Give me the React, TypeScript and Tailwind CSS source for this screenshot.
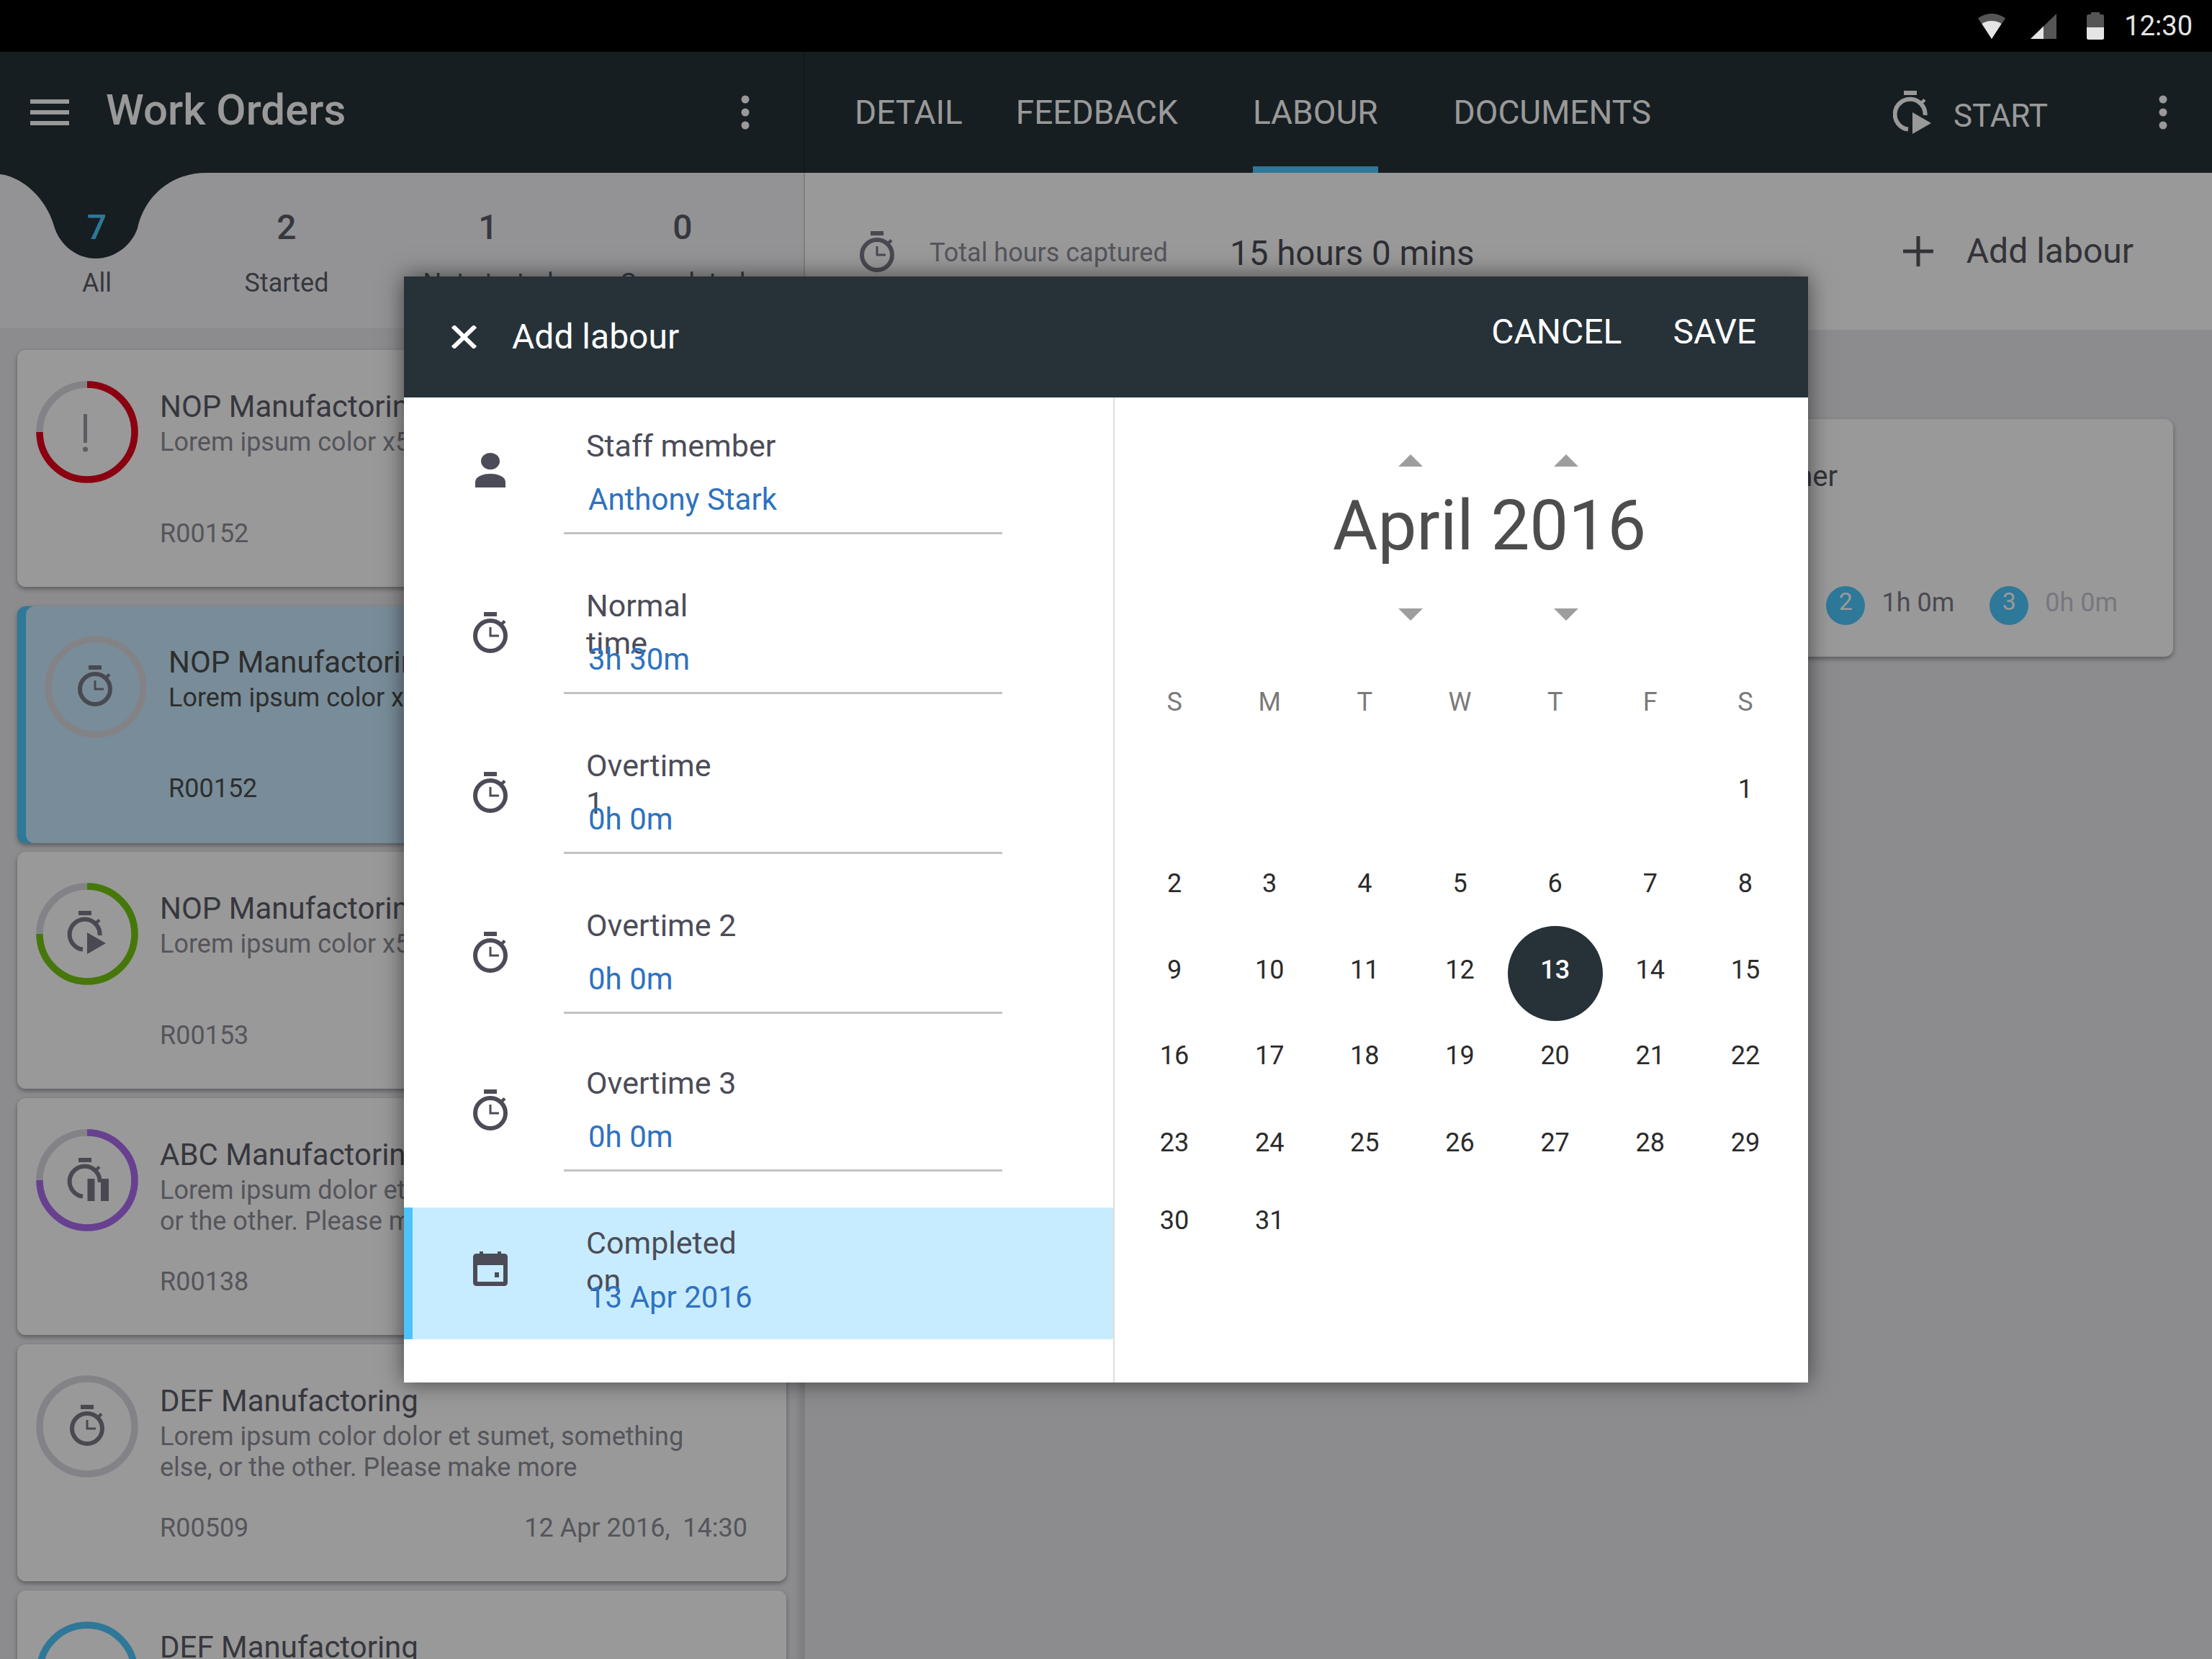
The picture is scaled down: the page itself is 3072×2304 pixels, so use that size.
import type { ReactNode } from "react";

const days = [
  { gap: "mt-[61px]", cells: ["", "", "", "", "", "", "1"] },
  { gap: "mt-[71px]", cells: ["2", "3", "4", "5", "6", "7", "8"] },
  { gap: "mt-[60px]", cells: ["9", "10", "11", "12", "13", "14", "15"] },
  { gap: "mt-[59px]", cells: ["16", "17", "18", "19", "20", "21", "22"] },
  { gap: "mt-[61px]", cells: ["23", "24", "25", "26", "27", "28", "29"] },
  { gap: "mt-[48px]", cells: ["30", "31", "", "", "", "", ""] },
];

function StopwatchShape() {
  return (
    <g>
      <rect x="15" y="0" width="18" height="6" fill="currentColor" />
      <circle cx="24" cy="33" r="21" fill="none" stroke="currentColor" strokeWidth="6" />
      <path d="M24 21v12h12" fill="none" stroke="currentColor" strokeWidth="3" />
      <path d="M39.5 17L44 12.5" fill="none" stroke="currentColor" strokeWidth="4.5" />
    </g>
  );
}

function Stopwatch({ className }: { className?: string }) {
  return (
    <svg viewBox="0 0 48 57" className={className}>
      <StopwatchShape />
    </svg>
  );
}

function TimerArc() {
  return (
    <g>
      <rect x="15" y="0" width="18" height="6" fill="currentColor" />
      <path d="M21 53.6A21 21 0 1 1 44.6 34" fill="none" stroke="currentColor" strokeWidth="6" />
      <path d="M39.5 17L44 12.5" fill="none" stroke="currentColor" strokeWidth="4.5" />
    </g>
  );
}

function TimerPlayShape() {
  return (
    <g>
      <TimerArc />
      <path d="M27 30L53 45L27 60Z" fill="currentColor" />
    </g>
  );
}

function TimerPauseShape() {
  return (
    <g>
      <TimerArc />
      <rect x="27.5" y="29" width="10" height="31" fill="currentColor" />
      <rect x="46" y="29" width="11" height="31" fill="currentColor" />
    </g>
  );
}

function Dots() {
  return (
    <svg viewBox="0 0 12 48" className="w-[12px] h-[48px] text-white">
      <ellipse cx="6" cy="6" rx="5.5" ry="5.5" fill="currentColor" />
      <ellipse cx="6" cy="24" rx="5.5" ry="5.5" fill="currentColor" />
      <ellipse cx="6" cy="42" rx="5.5" ry="5.5" fill="currentColor" />
    </svg>
  );
}

function Triangle({ down }: { down?: boolean }) {
  return (
    <svg viewBox="0 0 34 17" className="w-[34px] h-[17px]">
      <path d={down ? "M0 0H34L17 17Z" : "M0 17H34L17 0Z"} fill="#9e9e9e" />
    </svg>
  );
}

function Ring({ color, pct, children }: { color?: string; pct?: number; children?: ReactNode }) {
  return (
    <svg viewBox="0 0 142 142" className="w-[142px] h-[142px] shrink-0 text-[#7b7b88]">
      <circle cx="71" cy="71" r="66" fill="none" stroke="#dadae2" strokeWidth="9.5" />
      {color && (
        <circle
          cx="71"
          cy="71"
          r="66"
          fill="none"
          stroke={color}
          strokeWidth="9.5"
          pathLength={100}
          strokeDasharray={`${pct} ${100 - (pct ?? 0)}`}
          transform="rotate(-90 71 71)"
        />
      )}
      {children}
    </svg>
  );
}

function OrderCard({
  ring,
  title,
  desc,
  code,
  gap,
  active,
}: {
  ring: ReactNode;
  title: string;
  desc: string[];
  code: string;
  gap: string;
  active?: boolean;
}) {
  return (
    <div
      className={`${gap} h-[329px] shrink-0 rounded-[12px] shadow-[0_3px_6px_rgba(0,0,0,0.35)] ${active ? "bg-[#4ec8ff] pl-[12px]" : "bg-white"}`}
    >
      <div className={`flex h-full pl-[26px] pr-[54px] rounded-l-[12px] ${active ? "bg-[#c8ecff] pt-[41px]" : "bg-white rounded-[12px] pt-[43px]"}`}>
        {ring}
        <div className={`flex flex-col flex-1 pl-[30px] ${active ? "-mt-[41px] text-[#4d4d4d]" : "-mt-[43px] text-[#8e8e98]"}`}>
          <div className={`h-[48px] leading-[48px] text-[42px] ${active ? "mt-[54px] text-[#4d4d4d]" : "mt-[55px] text-[#5c5c68]"}`}>{title}</div>
          <div className="mt-[4px] text-[36px] leading-[43px]">
            {desc.map((d) => (
              <div key={d}>{d}</div>
            ))}
          </div>
          <div className={`mt-auto flex justify-between text-[36px] leading-[44px] ${active ? "mb-[54px]" : "mb-[52px]"}`}>
            <span>{code}</span>
            <span className="whitespace-pre">12 Apr 2016,  14:30</span>
          </div>
        </div>
      </div>
    </div>
  );
}

function FormRow({ icon, label, value, mb }: { icon: ReactNode; label: string; value: string; mb: string }) {
  return (
    <div className={`flex ${mb}`}>
      <div className="w-[222px] h-[127px] pl-[18px] flex items-center justify-center">{icon}</div>
      <div className="w-[609px]">
        <div className="h-[52px] leading-[52px] pl-[31px] text-[43px] text-[#4c4c58] whitespace-pre-line">{label}</div>
        <div className="mt-[23px] h-[52px] leading-[52px] pl-[34px] text-[#2e72c0]">{value}</div>
        <div className="mt-[19px] h-[3px] bg-[#c2c2c2]" />
      </div>
    </div>
  );
}

const sw = <Stopwatch className="w-[48px] h-[57px] text-[#4c4c58]" />;

export default function App() {
  return (
    <div className="relative w-[3072px] h-[2304px] overflow-hidden flex flex-col font-[Roboto,sans-serif]">
      {/* status bar */}
      <div className="h-[72px] shrink-0 bg-black flex items-center justify-end pr-[27px] text-[#e5e5e5]">
        <svg viewBox="0 0 38 35" className="w-[38px] h-[35px]">
          <path d="M0 6.5C5 2.5 12 0 19 0s14 2.5 19 6.5L19 35Z" fill="#555" />
          <path d="M5.5 14C9 11.5 14 10 19 10s10 1.5 13.5 4L19 35Z" fill="#e5e5e5" />
        </svg>
        <svg viewBox="0 0 36 35" className="ml-[35px] w-[36px] h-[35px]">
          <path d="M0 35L36 0V35Z" fill="#555" />
          <path d="M0 35L18 17.5V35Z" fill="#e5e5e5" />
        </svg>
        <svg viewBox="0 0 24 38" className="ml-[42px] w-[24px] h-[38px]">
          <path d="M6 3V0H18V3H21.5Q24 3 24 5.5V21H0V5.5Q0 3 2.5 3Z" fill="#555" />
          <path d="M0 21H24V35.5Q24 38 21.5 38H2.5Q0 38 0 35.5Z" fill="#e5e5e5" />
        </svg>
        <div className="ml-[28px] text-[38px] leading-none">12:30</div>
      </div>

      <div className="flex flex-1 min-h-0">
        {/* work orders column */}
        <div className="w-[1116px] shrink-0 flex flex-col bg-[#e9e9ed]">
          <div className="h-[168px] shrink-0 bg-[#263238] flex items-center pl-[42px] pr-[75px] text-white">
            <svg viewBox="0 0 54 36" className="w-[54px] h-[36px]">
              <path d="M0 0H54V6H0ZM0 15H54V21H0ZM0 30H54V36H0Z" fill="currentColor" />
            </svg>
            <div className="ml-[51px] -mt-[6px] text-[60px] font-medium">Work Orders</div>
            <div className="ml-auto">
              <Dots />
            </div>
          </div>

          <div className="relative h-[216px] shrink-0 bg-[#f6f6f8] flex pl-[2px] text-[#5c5c68]">
            <svg viewBox="0 0 287 119" className="absolute left-0 top-0 w-[287px] h-[119px]">
              <path
                d="M0 0H287C235 0 200 35 191 77C183 100 160 119 133 119C106 119 84 100 76 77C65 35 30 5 0 2Z"
                fill="#263238"
              />
            </svg>
            {[
              { n: "7", l: "All", w: "w-[265px]", c: "text-[#4ec8ff]" },
              { n: "2", l: "Started", w: "w-[262px]", c: "" },
              { n: "1", l: "Not started", w: "w-[298px]", c: "" },
              { n: "0", l: "Completed", w: "w-[242px]", c: "" },
            ].map((t) => (
              <div key={t.l} className={`relative ${t.w} flex flex-col items-center`}>
                <div className={`mt-[48px] h-[56px] leading-[56px] text-[48px] font-medium ${t.c}`}>{t.n}</div>
                <div className="mt-[27px] h-[44px] leading-[44px] text-[36px]">{t.l}</div>
              </div>
            ))}
          </div>

          <div className="flex-1 min-h-0 flex flex-col px-[24px] pt-[30px] shadow-[inset_-12px_0_12px_-8px_rgba(0,0,0,0.15)]">
            <OrderCard
              gap=""
              title="NOP Manufactoring"
              desc={["Lorem ipsum color x5"]}
              code="R00152"
              ring={
                <Ring color="#e6001c" pct={75}>
                  <rect x="66" y="46" width="5" height="40" fill="#9a9aa4" />
                  <circle cx="68.5" cy="95" r="3.5" fill="#9a9aa4" />
                </Ring>
              }
            />
            <OrderCard
              gap="mt-[27px]"
              active
              title="NOP Manufactoring"
              desc={["Lorem ipsum color x5"]}
              code="R00152"
              ring={
                <Ring>
                  <g transform="translate(46 41)">
                    <StopwatchShape />
                  </g>
                </Ring>
              }
            />
            <OrderCard
              gap="mt-[12px]"
              title="NOP Manufactoring"
              desc={["Lorem ipsum color x5"]}
              code="R00153"
              ring={
                <Ring color="#75c910" pct={75}>
                  <g transform="translate(44 39)">
                    <TimerPlayShape />
                  </g>
                </Ring>
              }
            />
            <OrderCard
              gap="mt-[13px]"
              title="ABC Manufactoring"
              desc={["Lorem ipsum dolor et sumet, something else,", "or the other. Please make more"]}
              code="R00138"
              ring={
                <Ring color="#ac6bf0" pct={75}>
                  <g transform="translate(44 40)">
                    <TimerPauseShape />
                  </g>
                </Ring>
              }
            />
            <OrderCard
              gap="mt-[13px]"
              title="DEF Manufactoring"
              desc={["Lorem ipsum color dolor et sumet, something", "else, or the other. Please make more"]}
              code="R00509"
              ring={
                <Ring>
                  <g transform="translate(47 41)">
                    <StopwatchShape />
                  </g>
                </Ring>
              }
            />
            <OrderCard
              gap="mt-[13px]"
              title="DEF Manufactoring"
              desc={["Lorem ipsum color dolor et sumet, something"]}
              code="R00510"
              ring={<Ring color="#4ec8ff" pct={100} />}
            />
          </div>
        </div>

        <div className="w-[2px] shrink-0 flex flex-col bg-[#d4d4d8]">
          <div className="h-[168px] bg-[#1e2a30]" />
        </div>

        {/* detail column */}
        <div className="flex-1 min-w-0 flex flex-col bg-[#e9e9ed]">
          <div className="h-[168px] shrink-0 bg-[#263238] flex items-stretch pl-[69px] pr-[62px] text-white text-[46px]">
            <div className="flex items-center border-b-[9px] pt-[9px] border-transparent">DETAIL</div>
            <div className="ml-[74px] flex items-center border-b-[9px] pt-[9px] border-transparent">FEEDBACK</div>
            <div className="ml-[104px] flex items-center border-b-[9px] pt-[9px] border-[#4ec8ff]">LABOUR</div>
            <div className="ml-[105px] flex items-center border-b-[9px] pt-[9px] border-transparent">DOCUMENTS</div>
            <div className="ml-auto flex items-center">
              <svg viewBox="0 0 54 60" className="w-[54px] h-[60px]">
                <TimerPlayShape />
              </svg>
              <div className="ml-[30px] mt-[10px] text-[44px]">START</div>
              <div className="ml-[154px]">
                <Dots />
              </div>
            </div>
          </div>

          <div className="h-[218px] shrink-0 bg-white flex items-center pl-[76px] pr-[109px]">
            <Stopwatch className="w-[48px] h-[57px] text-[#7b7b88]" />
            <div className="ml-[49px] mt-[4px] w-[417px] text-[36px] text-[#8e8e98]">Total hours captured</div>
            <div className="mt-[8px] text-[47.5px] text-[#4e4e58]">15 hours 0 mins</div>
            <svg viewBox="0 0 42 42" className="ml-auto w-[42px] h-[42px]">
              <path d="M21 0V42M0 21H42" fill="none" stroke="#55555e" strokeWidth="5" />
            </svg>
            <div className="ml-[46px] text-[48px] text-[#55555e]">Add labour</div>
          </div>

          <div className="mt-[124px] ml-[28px] mr-[54px] h-[330px] rounded-[12px] bg-white shadow-[0_3px_6px_rgba(0,0,0,0.35)] flex flex-col">
            <div className="mt-[56px] w-[1406px] text-right text-[40px] leading-[48px] text-[#55555e]">Planner</div>
            <div className="mt-[128px] flex justify-end pr-[77px] text-[36px]">
              <div className="w-[54px] h-[54px] rounded-full bg-[#4ec8ff] text-white text-[34px] leading-[42px] text-center">2</div>
              <div className="ml-[23px] -mt-[4px] leading-[54px] text-[#7b7b88]">1h 0m</div>
              <div className="ml-[49px] w-[54px] h-[54px] rounded-full bg-[#4ec8ff] text-white text-[34px] leading-[42px] text-center">3</div>
              <div className="ml-[23px] -mt-[4px] leading-[54px] text-[#c7c7d4]">0h 0m</div>
            </div>
          </div>
        </div>
      </div>

      {/* scrim */}
      <div className="absolute left-0 right-0 top-[72px] bottom-0 bg-black/40" />

      {/* add labour dialog */}
      <div className="absolute left-[561px] top-[384px] w-[1950px] h-[1536px] bg-white flex flex-col shadow-[0_0_30px_rgba(0,0,0,0.55)] text-[42px]">
        <div className="h-[168px] shrink-0 bg-[#263238] flex items-center pl-[66px] pr-[72px] text-white text-[48px]">
          <svg viewBox="0 0 35 32" className="w-[35px] h-[32px]">
            <path d="M2 1L33 31M33 1L2 31" fill="none" stroke="currentColor" strokeWidth="6" />
          </svg>
          <div className="ml-[49px]">Add labour</div>
          <div className="ml-auto mb-[14px]">CANCEL</div>
          <div className="ml-[71px] mb-[14px]">SAVE</div>
        </div>

        <div className="flex-1 min-h-0 flex">
          <div className="w-[987px] shrink-0 border-r-[2px] border-[#dddddd] pt-[41px]">
            <FormRow
              mb="mb-[73px]"
              label="Staff member"
              value="Anthony Stark"
              icon={
                <svg viewBox="0 0 42 48" className="w-[42px] h-[48px] mb-[8px]">
                  <ellipse cx="21" cy="11.5" rx="13" ry="11.5" fill="#4c4c58" />
                  <path d="M0 48V41C0 32 12 29 21 29C30 29 42 32 42 41V48Z" fill="#4c4c58" />
                </svg>
              }
            />
            <FormRow mb="mb-[73px]" label={"Normal\ntime"} value="3h 30m" icon={sw} />
            <FormRow mb="mb-[73px]" label={"Overtime\n1"} value="0h 0m" icon={sw} />
            <FormRow mb="mb-[70px]" label="Overtime 2" value="0h 0m" icon={sw} />
            <FormRow mb="mb-[50px]" label="Overtime 3" value="0h 0m" icon={sw} />

            <div className="h-[183px] bg-[#c8ecff] border-l-[12px] border-[#4ec3fa] flex pt-[23px]">
              <div className="w-[210px] h-[127px] pl-[6px] flex items-center justify-center">
                <svg viewBox="0 0 48 48" className="w-[48px] h-[48px] mb-[4px]">
                  <path
                    fillRule="evenodd"
                    d="M9 0h5v3h20V0h5v3h4q5 0 5 5v35q0 5-5 5H5q-5 0-5-5V8q0-5 5-5h4zM6 19v23h36V19zM30 29h6v7h-6z"
                    fill="#4c4c58"
                  />
                </svg>
              </div>
              <div>
                <div className="h-[52px] leading-[52px] pl-[31px] text-[43px] text-[#4c4c58] whitespace-pre-line">{"Completed\non"}</div>
                <div className="mt-[24px] h-[52px] leading-[52px] pl-[34px] text-[#2e72c0]">13 Apr 2016</div>
              </div>
            </div>
          </div>

          <div className="flex-1 min-w-0 pl-[17px] pr-[21px]">
            <div className="pl-[82px] pt-[79px] flex flex-col items-center">
              <div className="flex gap-[182px] pr-[4px]">
                <Triangle />
                <Triangle />
              </div>
              <div className="mt-[27px] h-[110px] leading-[110px] text-[96px] text-[#4d4d4d]">April 2016</div>
              <div className="mt-[60px] flex gap-[182px] pr-[4px]">
                <Triangle down />
                <Triangle down />
              </div>
            </div>

            <div className="mt-[83px] grid grid-cols-7 h-[60px] items-center text-center text-[36px] text-[#7a7a7a]">
              {["S", "M", "T", "W", "T", "F", "S"].map((d, i) => (
                <div key={i}>{d}</div>
              ))}
            </div>
            {days.map((week) => (
              <div key={week.cells.join()} className={`${week.gap} grid grid-cols-7 h-[60px] items-center text-center text-[36px] text-[#2b2b2b]`}>
                {week.cells.map((d, i) =>
                  d === "13" ? (
                    <div key={i} className="relative h-[60px] leading-[60px] font-medium text-white">
                      <span className="absolute left-0 -top-[31px] w-[132px] h-[132px] rounded-full bg-[#263238]" />
                      <span className="relative">{d}</span>
                    </div>
                  ) : (
                    <div key={i}>{d}</div>
                  )
                )}
              </div>
            ))}
          </div>
        </div>
      </div>
    </div>
  );
}
